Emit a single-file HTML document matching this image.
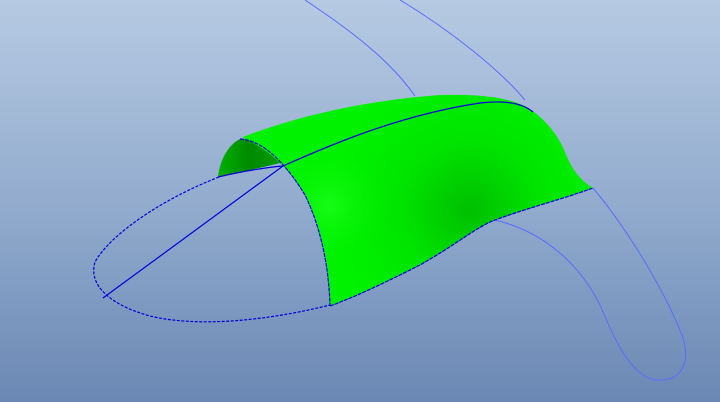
<!DOCTYPE html>
<html><head><style>html,body{margin:0;padding:0;width:720px;height:402px;overflow:hidden}</style></head>
<body>
<svg width="720" height="402" viewBox="0 0 720 402" xmlns="http://www.w3.org/2000/svg">
<defs>
<linearGradient id="bg" x1="0" y1="0" x2="0" y2="1">
<stop offset="0" stop-color="#b6cae2"/><stop offset="0.5" stop-color="#93acce"/><stop offset="1" stop-color="#6a88b4"/>
</linearGradient>
<radialGradient id="sh" cx="470" cy="210" r="140" gradientUnits="userSpaceOnUse">
<stop offset="0" stop-color="#00bf00"/><stop offset="0.5" stop-color="#00e400"/><stop offset="1" stop-color="#00f200"/>
</radialGradient>
<radialGradient id="hl" cx="330" cy="205" r="60" gradientUnits="userSpaceOnUse">
<stop offset="0" stop-color="#20ff20" stop-opacity="0.7"/><stop offset="1" stop-color="#00f000" stop-opacity="0"/>
</radialGradient>
<linearGradient id="cv" x1="0" y1="0" x2="1" y2="0">
<stop offset="0" stop-color="#00b000"/><stop offset="0.5" stop-color="#008a00"/><stop offset="1" stop-color="#009a00"/>
</linearGradient>
</defs>
<rect width="720" height="402" fill="url(#bg)"/>
<g fill="none" stroke="#5a6cff" stroke-width="1">
<path d="M305,0 C350,30 390,60 415,96"/>
<path d="M400,0 C450,30 500,70 525,100"/>
<path d="M593,188 C620,220 660,280 682,335 C692,365 680,382 655,380 C630,375 615,340 600,305 C580,265 545,232 495,220"/>
</g>
<g fill="none" stroke="#0000dd" stroke-width="1.2" stroke-dasharray="3,1.5">
<path d="M219,177 C160,200 110,235 95,262 C88,285 110,305 150,316 C200,328 270,320 330,305"/>
</g>
<path d="M103,298 L283,166" fill="none" stroke="#0000dd" stroke-width="1.2"/>
<path d="M218,177 C220,160 228,145 240,139 C260,138 272,150 280,163 C260,168 240,172 218,177Z" fill="url(#cv)"/>
<path d="M243,137 C300,115 370,100 440,95 C480,94 505,97 525,106 C545,118 558,135 565,152 C572,170 580,180 593,188 C560,200 520,210 490,222 C470,232 455,245 420,265 C390,280 360,295 330,306 C329,270 322,230 305,195 C290,170 270,150 243,138Z" fill="url(#sh)"/>
<path d="M243,137 C300,115 370,100 440,95 C480,94 505,97 525,106 C545,118 558,135 565,152 C572,170 580,180 593,188 C560,200 520,210 490,222 C470,232 455,245 420,265 C390,280 360,295 330,306 C329,270 322,230 305,195 C290,170 270,150 243,138Z" fill="url(#hl)"/>
<g fill="none" stroke="#0000dd" stroke-width="1.2">
<path d="M283,166 C330,145 400,115 480,103 C505,100 522,103 533,112"/>
<path d="M240,139 C262,140 285,162 305,195 C322,230 329,270 330,306" stroke-dasharray="4,1"/>
<path d="M330,306 C360,295 390,280 420,265 C455,245 470,232 490,222 C520,210 560,200 593,188" stroke-dasharray="4,1"/>
<path d="M218,177 C240,172 260,168 283,166"/>
</g>
</svg>
</body></html>
